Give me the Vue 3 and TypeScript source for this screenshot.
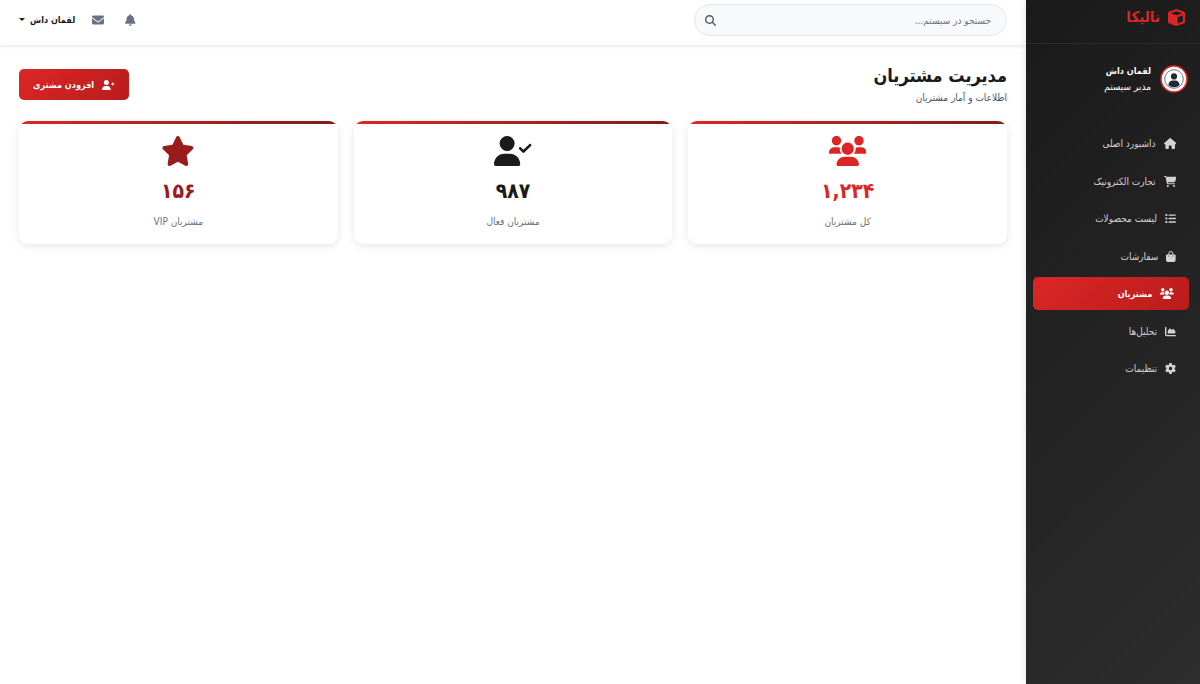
<script setup lang="ts">
import { ref } from 'vue'

interface Icon {
  w: number
  d: string
}

const person =
  'M96 128a128 128 0 1 1 256 0A128 128 0 1 1 96 128zM0 482.3C0 383.8 79.8 304 178.3 304h91.4C368.2 304 448 383.8 448 482.3c0 16.4-13.3 29.7-29.7 29.7H29.7C13.3 512 0 498.7 0 482.3z'

const icons: Record<string, Icon> = {
  cube: { w: 512, d: 'M234.5 5.7c13.9-5 29.1-5 43.1 0l192 68.6C495 83.4 512 107.5 512 134.6V377.4c0 27-17 51.2-42.5 60.3l-192 68.6c-13.9 5-29.1 5-43.1 0l-192-68.6C17 428.6 0 404.5 0 377.4V134.6c0-27 17-51.2 42.5-60.3l192-68.6zM256 66L82.3 128 256 190l173.7-62L256 66zm32 368.6l160-57.1v-188L288 246.6v188z' },
  home: { w: 576, d: 'M575.8 255.5c0 18-15 32.1-32 32.1h-32l.7 160.2c0 2.7-.2 5.4-.5 8.1V472c0 22.1-17.9 40-40 40H456c-1.1 0-2.2 0-3.3-.1c-1.4 .1-2.8 .1-4.2 .1H416 392c-22.1 0-40-17.9-40-40V448 384c0-17.7-14.3-32-32-32H256c-17.7 0-32 14.3-32 32v64 24c0 22.1-17.9 40-40 40H160 128.1c-1.5 0-3-.1-4.5-.2c-1.2 .1-2.4 .2-3.6 .2H104c-22.1 0-40-17.9-40-40V360c0-.9 0-1.9 .1-2.8V287.6H32c-18 0-32-14-32-32.1c0-9 3-17 10-24L266.4 8c7-7 15-8 22-8s15 2 21 7L564.8 231.5c8 7 12 15 11 24z' },
  cart: { w: 576, d: 'M0 24C0 10.7 10.7 0 24 0H69.5c22 0 41.5 12.8 50.6 32h411c26.3 0 45.5 25 38.6 50.4l-41 152.3c-8.5 31.4-37 53.3-69.5 53.3H170.7l5.4 28.5c2.2 11.3 12.1 19.5 23.6 19.5H488c13.3 0 24 10.7 24 24s-10.7 24-24 24H199.7c-34.6 0-64.3-24.6-70.7-58.5L77.4 54.5c-.7-3.8-4-6.5-7.9-6.5H24C10.7 48 0 37.3 0 24zM128 464a48 48 0 1 1 96 0 48 48 0 1 1 -96 0zm336-48a48 48 0 1 1 0 96 48 48 0 1 1 0-96z' },
  list: { w: 512, d: 'M40 48C26.7 48 16 58.7 16 72v48c0 13.3 10.7 24 24 24H88c13.3 0 24-10.7 24-24V72c0-13.3-10.7-24-24-24H40zM192 64c-17.7 0-32 14.3-32 32s14.3 32 32 32H480c17.7 0 32-14.3 32-32s-14.3-32-32-32H192zm0 160c-17.7 0-32 14.3-32 32s14.3 32 32 32H480c17.7 0 32-14.3 32-32s-14.3-32-32-32H192zm0 160c-17.7 0-32 14.3-32 32s14.3 32 32 32H480c17.7 0 32-14.3 32-32s-14.3-32-32-32H192zM16 232v48c0 13.3 10.7 24 24 24H88c13.3 0 24-10.7 24-24V232c0-13.3-10.7-24-24-24H40c-13.3 0-24 10.7-24 24zM40 368c-13.3 0-24 10.7-24 24v48c0 13.3 10.7 24 24 24H88c13.3 0 24-10.7 24-24V392c0-13.3-10.7-24-24-24H40z' },
  bag: { w: 448, d: 'M160 112c0-35.3 28.7-64 64-64s64 28.7 64 64v48H160V112zm-48 48H48c-26.5 0-48 21.5-48 48V416c0 53 43 96 96 96H352c53 0 96-43 96-96V208c0-26.5-21.5-48-48-48H336V112C336 50.1 285.9 0 224 0S112 50.1 112 112v48zm24 48a24 24 0 1 1 0 48 24 24 0 1 1 0-48zm152 24a24 24 0 1 1 48 0 24 24 0 1 1 -48 0z' },
  users: { w: 640, d: 'M319.9 320c57.41 0 103.1-46.56 103.1-104s-46.54-104-103.1-104S215.9 158.6 215.9 216S262.5 320 319.9 320zM369.9 352H270C191.6 352 128 411.7 128 485.3C128 500.1 140.7 512 156.4 512h327.2C499.3 512 512 500.1 512 485.3C512 411.7 448.4 352 369.9 352zM512 160c44.18 0 80-35.82 80-80S556.2 0 512 0S432 35.82 432 80S467.8 160 512 160zM183.9 216c0-5.449 .9824-10.63 1.609-15.91C174.6 194.1 162.6 192 149.9 192H88.08C39.44 192 0 233.8 0 285.3C0 295.6 7.887 304 17.62 304h199.5C196.7 280.2 183.9 249.7 183.9 216zM128 160c44.18 0 80-35.82 80-80S172.2 0 128 0S48 35.82 48 80S83.82 160 128 160zM551.9 192h-61.84c-12.8 0-24.88 3.037-35.86 8.24C454.8 205.5 455.8 210.6 455.8 216c0 33.71-12.78 64.21-33.16 88h199.7C632.1 304 640 295.6 640 285.3C640 233.8 600.6 192 551.9 192z' },
  chart: { w: 512, d: 'M64 64c0-17.7-14.3-32-32-32S0 46.3 0 64V400c0 44.2 35.8 80 80 80H480c17.7 0 32-14.3 32-32s-14.3-32-32-32H80c-8.8 0-16-7.2-16-16V64zm96 288H448c17.7 0 32-14.3 32-32V251.8c0-7.6-2.7-15-7.7-20.8l-65.8-76.8c-12.1-14.2-33.7-15-46.9-1.8l-21 21c-10 10-26.4 9.2-35.4-1.6l-39.2-47c-12.6-15.1-35.7-15.4-48.7-.6L135.9 215c-5.1 5.8-7.9 13.3-7.9 21.1v84c0 17.7 14.3 32 32 32z' },
  gear: { w: 512, d: 'M495.9 166.6c3.2 8.7 .5 18.4-6.4 24.6l-43.3 39.4c1.1 8.3 1.7 16.8 1.7 25.4s-.6 17.1-1.7 25.4l43.3 39.4c6.9 6.2 9.6 15.9 6.4 24.6c-4.4 11.9-9.7 23.3-15.8 34.3l-4.7 8.1c-6.6 11-14 21.4-22.1 31.2c-5.9 7.2-15.7 9.6-24.5 6.8l-55.7-17.7c-13.4 10.3-28.2 18.9-44 25.4l-12.5 57.1c-2 9.1-9 16.3-18.2 17.8c-13.8 2.3-28 3.5-42.5 3.5s-28.7-1.2-42.5-3.5c-9.2-1.5-16.2-8.7-18.2-17.8l-12.5-57.1c-15.8-6.5-30.6-15.1-44-25.4L83.1 425.9c-8.8 2.8-18.6 .3-24.5-6.8c-8.1-9.8-15.5-20.2-22.1-31.2l-4.7-8.1c-6.1-11-11.4-22.4-15.8-34.3c-3.2-8.7-.5-18.4 6.4-24.6l43.3-39.4C64.6 273.1 64 264.6 64 256s.6-17.1 1.7-25.4L22.4 191.2c-6.9-6.2-9.6-15.9-6.4-24.6c4.4-11.9 9.7-23.3 15.8-34.3l4.7-8.1c6.6-11 14-21.4 22.1-31.2c5.9-7.2 15.7-9.6 24.5-6.8l55.7 17.7c13.4-10.3 28.2-18.9 44-25.4l12.5-57.1c2-9.1 9-16.3 18.2-17.8C227.3 1.2 241.5 0 256 0s28.7 1.2 42.5 3.5c9.2 1.5 16.2 8.7 18.2 17.8l12.5 57.1c15.8 6.5 30.6 15.1 44 25.4l55.7-17.7c8.8-2.8 18.6-.3 24.5 6.8c8.1 9.8 15.5 20.2 22.1 31.2l4.7 8.1c6.1 11 11.4 22.4 15.8 34.3zM256 336a80 80 0 1 0 0-160 80 80 0 1 0 0 160z' },
  search: { w: 512, d: 'M416 208c0 45.9-14.9 88.3-40 122.7L502.6 457.4c12.5 12.5 12.5 32.8 0 45.3s-32.8 12.5-45.3 0L330.7 376c-34.4 25.2-76.8 40-122.7 40C93.1 416 0 322.9 0 208S93.1 0 208 0S416 93.1 416 208zM208 352a144 144 0 1 0 0-288 144 144 0 1 0 0 288z' },
  bell: { w: 448, d: 'M224 0c-17.7 0-32 14.3-32 32V51.2C119 66 64 130.6 64 208v18.8c0 47-17.3 92.4-48.5 127.6l-7.4 8.3c-8.4 9.4-10.4 22.9-5.3 34.4S19.4 416 32 416H416c12.6 0 24-7.4 29.2-18.9s3.1-25-5.3-34.4l-7.4-8.3C401.3 319.2 384 273.9 384 226.8V208c0-77.4-55-142-128-156.8V32c0-17.7-14.3-32-32-32zm45.3 493.3c12-12 18.7-28.3 18.7-45.3H224 160c0 17 6.7 33.3 18.7 45.3s28.3 18.7 45.3 18.7s33.3-6.7 45.3-18.7z' },
  envelope: { w: 512, d: 'M48 64C21.5 64 0 85.5 0 112c0 15.1 7.1 29.3 19.2 38.4L236.8 313.6c11.4 8.5 27 8.5 38.4 0L492.8 150.4c12.1-9.1 19.2-23.3 19.2-38.4c0-26.5-21.5-48-48-48H48zM0 176V384c0 35.3 28.7 64 64 64H448c35.3 0 64-28.7 64-64V176L294.4 339.2c-22.8 17.1-54 17.1-76.8 0L0 176z' },
  userPlus: { w: 640, d: person + 'M528 268V232H492c-13.3 0-24-10.7-24-24s10.7-24 24-24h36V148c0-13.3 10.7-24 24-24s24 10.7 24 24v36h36c13.3 0 24 10.7 24 24s-10.7 24-24 24h-36v36c0 13.3-10.7 24-24 24s-24-10.7-24-24z' },
  userCheck: { w: 640, d: person + 'M632 171L518 283c-9 9-22 9-31 0l-56-56c-9-9-9-22 0-31s22-9 31 0l40 40L601 140c9-9 22-9 31 0s9 22 0 31z' },
  star: { w: 576, d: 'M316.9 18C311.6 7 300.4 0 288.1 0s-23.4 7-28.8 18L195 150.3 51.4 171.5c-12 1.8-22 10.2-25.7 21.7s-.7 24.2 7.9 32.7L137.8 329 113.2 474.7c-2 12 3 24.2 12.9 31.3s23 8 33.8 2.3l128.3-68.5 128.3 68.5c10.8 5.7 23.9 4.9 33.8-2.3s14.9-19.3 12.9-31.3L438.5 329 542.7 225.9c8.6-8.5 11.7-21.2 7.9-32.7s-13.7-19.9-25.7-21.7L381.2 150.3 316.9 18z' },
}

const box = (name: string) => `0 0 ${icons[name].w} 512`

const active = ref('users')
const query = ref('')

const menu = [
  { icon: 'home', label: 'داشبورد اصلی' },
  { icon: 'cart', label: 'تجارت الکترونیک' },
  { icon: 'list', label: 'لیست محصولات' },
  { icon: 'bag', label: 'سفارشات' },
  { icon: 'users', label: 'مشتریان' },
  { icon: 'chart', label: 'تحلیل‌ها' },
  { icon: 'gear', label: 'تنظیمات' },
]

const stats = [
  { icon: 'users', value: '۱,۲۳۴', label: 'کل مشتریان', tone: 'red' },
  { icon: 'userCheck', value: '۹۸۷', label: 'مشتریان فعال', tone: 'black' },
  { icon: 'star', value: '۱۵۶', label: 'مشتریان VIP', tone: 'maroon' },
]
</script>

<template>
  <div class="layout" dir="rtl" lang="fa">
    <aside class="sidebar">
      <a class="brand" href="#">
        <svg class="icon" :viewBox="box('cube')"><path :d="icons.cube.d" /></svg>
        <span>نالیکا</span>
      </a>
      <div class="profile">
        <svg class="avatar" viewBox="0 0 28 28">
          <circle cx="14" cy="14" r="13" fill="#fff" stroke="#dc2626" stroke-width="1.6" />
          <circle cx="14" cy="14" r="9.3" fill="#fff" stroke="#4b5563" stroke-width="0.8" />
          <circle cx="14" cy="11.4" r="3.1" fill="#1f2937" />
          <path d="M8.4 20.2c0-3 2.1-4.8 4.2-4.8h2.8c2.1 0 4.2 1.8 4.2 4.8c-3 2.6-8.2 2.6-11.2 0z" fill="#1f2937" />
        </svg>
        <div class="who">
          <strong>لقمان داش</strong>
          <span>مدیر سیستم</span>
        </div>
      </div>
      <nav class="menu">
        <a
          v-for="item in menu"
          :key="item.icon"
          href="#"
          class="item"
          :class="{ current: active === item.icon }"
          @click.prevent="active = item.icon"
        >
          <svg class="icon" :viewBox="box(item.icon)"><path :d="icons[item.icon].d" /></svg>
          <span>{{ item.label }}</span>
        </a>
      </nav>
    </aside>

    <div class="main">
      <header class="topbar">
        <div class="search">
          <input v-model="query" type="text" aria-label="جستجو" placeholder="جستجو در سیستم..." />
          <button type="button" aria-label="جستجو">
            <svg class="icon" :viewBox="box('search')"><path :d="icons.search.d" /></svg>
          </button>
        </div>
        <div class="actions">
          <button type="button" class="tool" aria-label="اعلان‌ها">
            <svg class="icon" :viewBox="box('bell')"><path :d="icons.bell.d" /></svg>
          </button>
          <button type="button" class="tool" aria-label="پیام‌ها">
            <svg class="icon" :viewBox="box('envelope')"><path :d="icons.envelope.d" /></svg>
          </button>
          <button type="button" class="account">
            <span>لقمان داش</span>
            <i class="caret"></i>
          </button>
        </div>
      </header>

      <main class="content">
        <div class="heading">
          <div>
            <h1>مدیریت مشتریان</h1>
            <p>اطلاعات و آمار مشتریان</p>
          </div>
          <button type="button" class="add">
            <svg class="icon" :viewBox="box('userPlus')"><path :d="icons.userPlus.d" /></svg>
            <span>افزودن مشتری</span>
          </button>
        </div>
        <section class="stats">
          <article v-for="stat in stats" :key="stat.label" class="card" :class="stat.tone">
            <svg class="icon" :viewBox="box(stat.icon)"><path :d="icons[stat.icon].d" /></svg>
            <strong>{{ stat.value }}</strong>
            <span>{{ stat.label }}</span>
          </article>
        </section>
      </main>
    </div>
  </div>
</template>

<style>
body {
  margin: 0;
  background: #fff;
}
</style>

<style scoped>
.layout {
  display: flex;
  min-height: 100vh;
  font-family: "DejaVu Sans Condensed", "DejaVu Sans", sans-serif;
  font-size: 10px;
  color: #1a1a1a;
}

.layout * {
  box-sizing: border-box;
}

button,
input {
  font: inherit;
  color: inherit;
  border: 0;
  padding: 0;
  background: none;
}

a {
  color: inherit;
  text-decoration: none;
}

.icon {
  display: block;
  height: 12px;
  fill: currentColor;
  flex: none;
}

.sidebar {
  flex: none;
  width: 174px;
  color: #fff;
  background: linear-gradient(135deg, #1a1a1a, #2d2d2d);
  box-shadow: 0 0 8px rgba(0, 0, 0, 0.12);
  z-index: 2;
}

.brand {
  display: flex;
  align-items: center;
  gap: 8px;
  height: 44px;
  padding: 0 15px 9px;
  border-bottom: 1px solid rgba(255, 255, 255, 0.06);
  color: #dc2626;
  font-size: 15px;
  font-weight: 700;
}

.brand .icon {
  height: 17px;
}

.profile {
  display: flex;
  align-items: center;
  gap: 9px;
  padding: 20px 12px 33px;
}

.avatar {
  width: 28px;
  height: 28px;
}

.who {
  display: flex;
  flex-direction: column;
  line-height: 15px;
}

.who strong {
  font-size: 9px;
}

.menu {
  display: flex;
  flex-direction: column;
  justify-content: space-between;
  min-height: 258px;
  padding: 0 9px;
}

.item {
  display: flex;
  align-items: center;
  gap: 8px;
  height: 33px;
  padding: 0 15px;
  border-radius: 5px;
  color: rgba(255, 255, 255, 0.8);
}

.item .icon {
  height: 11px;
}

.item.current {
  color: #fff;
  font-size: 9px;
  font-weight: 700;
  background: linear-gradient(135deg, #dc2626, #b91c1c);
  transform: translateX(-2px);
}

.main {
  flex: 1;
  min-width: 0;
}

.topbar {
  display: flex;
  align-items: flex-start;
  justify-content: space-between;
  height: 45px;
  padding: 4px 19px 0;
  box-shadow: 0 1px 4px rgba(0, 0, 0, 0.12);
}

.search {
  display: flex;
  align-items: center;
  width: 313px;
  height: 32px;
  padding: 0 15px 0 10px;
  border: 1px solid #e5e7eb;
  border-radius: 16px;
  background: #f8f9fa;
}

.search input {
  flex: 1;
  min-width: 0;
  outline: none;
}

.search input::placeholder {
  color: #6c757d;
  opacity: 1;
}

.search button {
  color: #4b5563;
}

.search .icon {
  height: 11px;
}

.actions {
  display: flex;
  align-items: center;
  height: 31px;
}

.tool {
  display: flex;
  justify-content: center;
  width: 33px;
  color: #6b7280;
}

.account {
  display: flex;
  align-items: center;
  gap: 5px;
  margin-right: 6px;
  font-size: 9px;
  font-weight: 700;
}

.caret {
  border: 3px solid transparent;
  border-top-color: #1a1a1a;
  border-bottom: 0;
}

.content {
  padding: 18px 19px;
}

.heading {
  display: flex;
  align-items: center;
  justify-content: space-between;
  margin-bottom: 15px;
}

h1 {
  margin: 0;
  font-size: 18px;
  line-height: 25px;
}

p {
  margin: 2px 0 0;
  line-height: 16px;
  color: #4b5563;
}

.add {
  display: flex;
  align-items: center;
  gap: 8px;
  height: 31px;
  padding: 0 14px;
  border-radius: 5px;
  color: #fff;
  font-size: 9px;
  font-weight: 700;
  background: linear-gradient(135deg, #dc2626, #b91c1c);
}

.add .icon {
  height: 10px;
}

.stats {
  display: grid;
  grid-template-columns: repeat(3, 1fr);
  gap: 16px;
}

.card {
  position: relative;
  display: flex;
  flex-direction: column;
  align-items: center;
  padding: 15px;
  border-radius: 9px;
  background: #fff;
  box-shadow: 0 2px 8px rgba(0, 0, 0, 0.1);
  overflow: hidden;
}

.card::before {
  content: "";
  position: absolute;
  inset: 0 0 auto;
  height: 3px;
  background: linear-gradient(90deg, #dc2626, #7f1d1d);
}

.card .icon {
  height: 30px;
}

.card strong {
  margin-top: 8px;
  font-size: 21px;
  line-height: 34px;
}

.card span {
  margin-top: 6px;
  line-height: 15px;
  color: #6b7280;
}

.red {
  color: #dc2626;
}

.black {
  color: #1a1a1a;
}

.maroon {
  color: #991b1b;
}
</style>
